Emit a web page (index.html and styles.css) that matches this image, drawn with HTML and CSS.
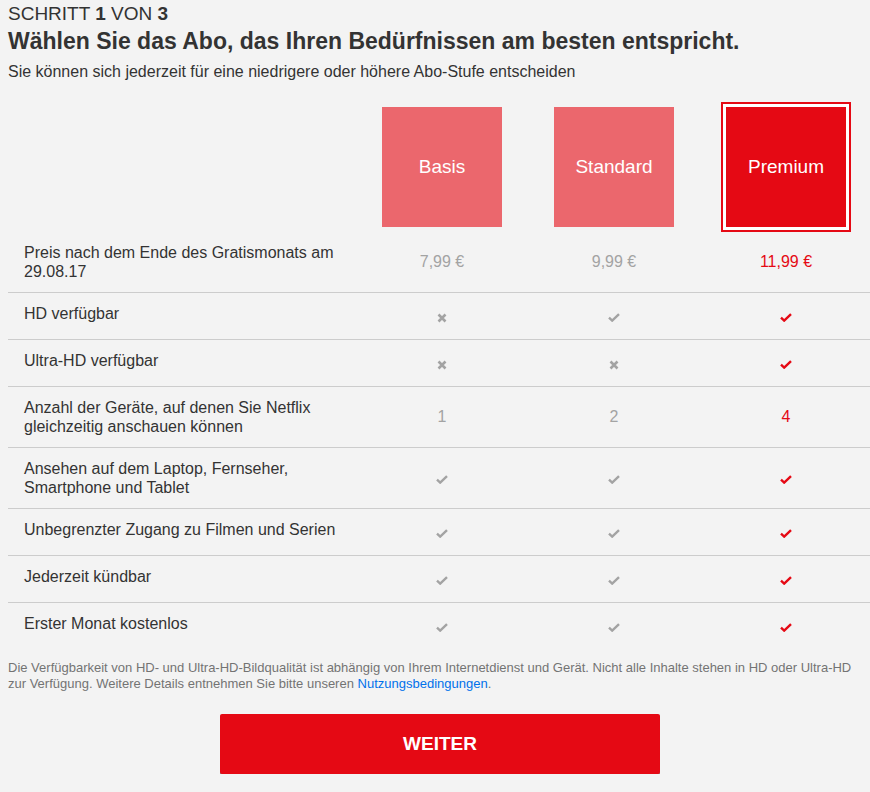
FILE: index.html
```html
<!DOCTYPE html>
<html lang="de">
<head>
<meta charset="utf-8">
<title>Abo wählen</title>
<link rel="stylesheet" href="styles.css">
</head>
<body>
<div class="page">
  <div class="step">SCHRITT <b>1</b> VON <b>3</b></div>
  <h1 class="title">Wählen Sie das Abo, das Ihren Bedürfnissen am besten entspricht.</h1>
  <p class="subtitle">Sie können sich jederzeit für eine niedrigere oder höhere Abo-Stufe entscheiden</p>

  <div class="plans">
    <div class="plans-spacer"></div>
    <div class="plan-cell"><div class="plan">Basis</div></div>
    <div class="plan-cell"><div class="plan">Standard</div></div>
    <div class="plan-cell"><div class="plan plan-selected">Premium</div></div>
  </div>

  <div class="table">
    <div class="row">
      <div class="label">Preis nach dem Ende des Gratismonats am 29.08.17</div>
      <div class="val">7,99 €</div>
      <div class="val">9,99 €</div>
      <div class="val sel">11,99 €</div>
    </div>
    <div class="row">
      <div class="label">HD verfügbar</div>
      <div class="val"><svg class="ic-x" viewBox="0 0 10 10"><path d="M1.5 1.5L8.5 8.5M8.5 1.5L1.5 8.5"/></svg></div>
      <div class="val"><svg class="ic-ok" viewBox="0 0 12 9"><path d="M1 4.6L4.2 7.6L11 1.2"/></svg></div>
      <div class="val sel"><svg class="ic-ok" viewBox="0 0 12 9"><path d="M1 4.6L4.2 7.6L11 1.2"/></svg></div>
    </div>
    <div class="row">
      <div class="label">Ultra-HD verfügbar</div>
      <div class="val"><svg class="ic-x" viewBox="0 0 10 10"><path d="M1.5 1.5L8.5 8.5M8.5 1.5L1.5 8.5"/></svg></div>
      <div class="val"><svg class="ic-x" viewBox="0 0 10 10"><path d="M1.5 1.5L8.5 8.5M8.5 1.5L1.5 8.5"/></svg></div>
      <div class="val sel"><svg class="ic-ok" viewBox="0 0 12 9"><path d="M1 4.6L4.2 7.6L11 1.2"/></svg></div>
    </div>
    <div class="row">
      <div class="label">Anzahl der Geräte, auf denen Sie Netflix gleichzeitig anschauen können</div>
      <div class="val">1</div>
      <div class="val">2</div>
      <div class="val sel">4</div>
    </div>
    <div class="row">
      <div class="label">Ansehen auf dem Laptop, Fernseher, Smartphone und Tablet</div>
      <div class="val"><svg class="ic-ok" viewBox="0 0 12 9"><path d="M1 4.6L4.2 7.6L11 1.2"/></svg></div>
      <div class="val"><svg class="ic-ok" viewBox="0 0 12 9"><path d="M1 4.6L4.2 7.6L11 1.2"/></svg></div>
      <div class="val sel"><svg class="ic-ok" viewBox="0 0 12 9"><path d="M1 4.6L4.2 7.6L11 1.2"/></svg></div>
    </div>
    <div class="row">
      <div class="label">Unbegrenzter Zugang zu Filmen und Serien</div>
      <div class="val"><svg class="ic-ok" viewBox="0 0 12 9"><path d="M1 4.6L4.2 7.6L11 1.2"/></svg></div>
      <div class="val"><svg class="ic-ok" viewBox="0 0 12 9"><path d="M1 4.6L4.2 7.6L11 1.2"/></svg></div>
      <div class="val sel"><svg class="ic-ok" viewBox="0 0 12 9"><path d="M1 4.6L4.2 7.6L11 1.2"/></svg></div>
    </div>
    <div class="row">
      <div class="label">Jederzeit kündbar</div>
      <div class="val"><svg class="ic-ok" viewBox="0 0 12 9"><path d="M1 4.6L4.2 7.6L11 1.2"/></svg></div>
      <div class="val"><svg class="ic-ok" viewBox="0 0 12 9"><path d="M1 4.6L4.2 7.6L11 1.2"/></svg></div>
      <div class="val sel"><svg class="ic-ok" viewBox="0 0 12 9"><path d="M1 4.6L4.2 7.6L11 1.2"/></svg></div>
    </div>
    <div class="row">
      <div class="label">Erster Monat kostenlos</div>
      <div class="val"><svg class="ic-ok" viewBox="0 0 12 9"><path d="M1 4.6L4.2 7.6L11 1.2"/></svg></div>
      <div class="val"><svg class="ic-ok" viewBox="0 0 12 9"><path d="M1 4.6L4.2 7.6L11 1.2"/></svg></div>
      <div class="val sel"><svg class="ic-ok" viewBox="0 0 12 9"><path d="M1 4.6L4.2 7.6L11 1.2"/></svg></div>
    </div>
  </div>

  <p class="disclaimer">Die Verfügbarkeit von HD- und Ultra-HD-Bildqualität ist abhängig von Ihrem Internetdienst und Gerät. Nicht alle Inhalte stehen in HD oder Ultra-HD zur Verfügung. Weitere Details entnehmen Sie bitte unseren <a href="#" class="link">Nutzungsbedingungen</a>.</p>

  <div class="actions">
    <button class="btn" type="button">WEITER</button>
  </div>
</div>
</body>
</html>
```

FILE: styles.css
```css
html {
  overflow: hidden;
}
body {
  margin: 0;
  background: #f3f3f3;
  color: #333;
  font-family: "Liberation Sans", Arial, sans-serif;
}
.page {
  width: 864px;
  padding: 3px 0 0 8px;
}
.step {
  font-size: 19px;
  line-height: 22px;
}
.step b {
  font-weight: bold;
}
.title {
  margin: 2px 0 0;
  font-size: 23px;
  line-height: 28px;
  font-weight: bold;
}
.subtitle {
  margin: 7px 0 0;
  font-size: 16px;
  line-height: 20px;
}
.plans {
  display: grid;
  grid-template-columns: 348px 172px 172px 172px;
  padding: 25px 0 5px;
}
.plan-cell {
  display: flex;
  justify-content: center;
}
.plan {
  width: 120px;
  height: 120px;
  display: flex;
  align-items: center;
  justify-content: center;
  background: #eb676d;
  color: #fff;
  font-size: 19px;
}
.plan-selected {
  background: #e50914;
  box-shadow: 0 0 0 3px #fff, 0 0 0 5px #e50914;
}
.table {
  display: flex;
  flex-direction: column;
}
.row {
  display: grid;
  grid-template-columns: 348px 172px 172px 172px;
  min-height: 46px;
  border-top: 1px solid #ccc;
}
.row:first-child {
  border-top: none;
}
.label {
  padding: 11px 16px;
  font-size: 16px;
  line-height: 19px;
  align-self: start;
}
.val {
  display: flex;
  align-items: center;
  justify-content: center;
  font-size: 16px;
  color: #a3a3a3;
}
.val.sel {
  color: #e50914;
}
.ic-x {
  width: 10px;
  height: 10px;
  margin-top: 3px;
  fill: none;
  stroke: #a3a3a3;
  stroke-width: 2.6;
}
.ic-ok {
  width: 12px;
  height: 9px;
  margin-top: 3px;
  fill: none;
  stroke: #a3a3a3;
  stroke-width: 2.4;
}
.sel .ic-ok {
  stroke: #e50914;
}
.disclaimer {
  margin: 11px 0 0;
  width: 856px;
  font-size: 13px;
  line-height: 16px;
  color: #737373;
}
.link {
  color: #0071eb;
  text-decoration: none;
}
.actions {
  display: flex;
  justify-content: center;
  padding: 22px 0 0;
}
.btn {
  width: 440px;
  height: 60px;
  border: none;
  border-radius: 2px;
  background: #e50914;
  color: #fff;
  font-family: "Liberation Sans", Arial, sans-serif;
  font-size: 19px;
  font-weight: bold;
  box-shadow: 0 1px 0 rgba(0, 0, 0, 0.45);
  cursor: pointer;
}
```
